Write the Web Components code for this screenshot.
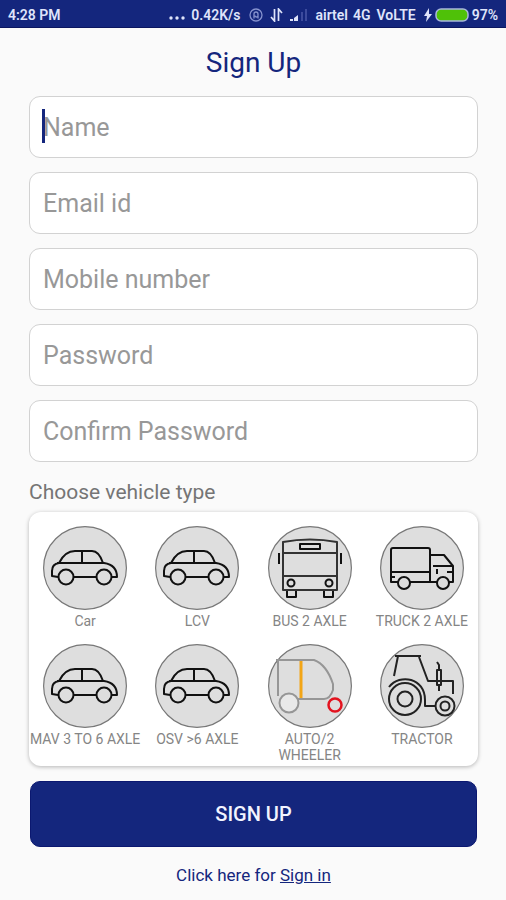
<!DOCTYPE html>
<html lang="en">
<head>
<meta charset="utf-8">
<meta name="viewport" content="width=device-width, initial-scale=1">
<title>Sign Up</title>
<style>
html { background: #fafafa; }
body { margin: 0; font-family: Roboto, "Liberation Sans", sans-serif; color: #757575; --navy: #14267d; }
</style>
</head>
<body>
<signup-screen></signup-screen>
<script>
const define = (name, html, setup) => customElements.define(name, class extends HTMLElement {
  constructor() {
    super();
    const t = document.createElement('template');
    t.innerHTML = html;
    this.attachShadow({ mode: 'open' }).append(t.content.cloneNode(true));
  }
  connectedCallback() { if (setup) setup(this, this.shadowRoot); }
});

define('status-bar', `
<style>
:host { display: flex; justify-content: space-between; align-items: center; height: 28px; padding: 2px 8px 0; box-sizing: border-box;
  background: var(--navy); color: #dfe4fa; font-size: 14px; font-weight: 600; line-height: 16px; white-space: nowrap; border-bottom: 1px solid #0b1660; }
.right { display: flex; align-items: center; }
svg { display: block; fill: none; }
.dots { margin-right: 6px; } .ring { margin: 0 7px 0 8px; } .arrows { margin-right: 7px; } .signal { margin-right: 8px; }
.net { margin: 0 6px 0 5px; } .bolt { margin: 0 2px 0 7px; } .battery { margin-right: 3px; }
</style>
<span>4:28 PM</span>
<span class="right">
<svg class="dots" width="16" height="16"><g fill="#dfe4fa"><circle cx="2" cy="11" r="1.7"/><circle cx="8" cy="11" r="1.7"/><circle cx="14" cy="11" r="1.7"/></g></svg>
<span>0.42K/s</span>
<svg class="ring" width="14" height="14" stroke="#8793cf" stroke-width="1.3"><circle cx="7" cy="7" r="6"/><path d="M5 10.500V6a2 2 0 0 1 4 0v1.500a1.500 1.500 0 0 1-3 0M9 8v2.500"/></svg>
<svg class="arrows" width="13" height="14" stroke="#dfe4fa" stroke-width="1.7"><path d="M4.500 1v12L1 9M8.500 13V1L12 5"/></svg>
<svg class="signal" width="18" height="14"><path fill="#dfe4fa" d="M0 13v-2h3v2zM4 13v-3l4-3v6z"/><path fill="#3c4b9d" d="M11 13V4h2v9zM15 13V1h2v12z"/></svg>
<span>airtel</span><span class="net">4G</span><span>VoLTE</span>
<svg class="bolt" width="10" height="14"><path fill="#dfe4fa" d="M6 0 1 8h3L3 14l6-8H6z"/></svg>
<svg class="battery" width="34" height="14"><rect x="1" y="1" width="32" height="12" rx="5" fill="#4fc108" stroke="#a9b6dc" stroke-width="1.500"/></svg>
<span>97%</span>
</span>`);

define('text-field', `
<style>
:host { display: block; position: relative; }
input { display: block; width: 100%; height: 62px; box-sizing: border-box; margin: 0; padding: 0 13px; border: 1px solid #d2d2d2;
  border-radius: 11px; outline: none; background: #fff; color: #333; font: 25px/32px Roboto, "Liberation Sans", sans-serif; }
input::placeholder { color: #989898; opacity: 1; }
:host([active])::after { content: ""; position: absolute; left: 13px; top: 13px; width: 3px; height: 34px; background: var(--navy); }
</style>
<input>`, (host, root) => {
  const input = root.querySelector('input');
  input.type = host.getAttribute('type') || 'text';
  input.placeholder = host.getAttribute('label');
  input.setAttribute('aria-label', host.getAttribute('label'));
});

const icons = {
  car: '<path d="M16 37Q22 25 32 25H49Q56 25 60 37M39 25V37M14 37H61Q74 39 74 51H69M16 37Q9 38 9 45V50L15 51M31 51H53"/><circle cx="23" cy="51" r="7.500"/><circle cx="61" cy="51" r="7.500"/>',
  bus: '<path d="M15 16Q42 11 69 16V64H15zM15 27H69M15 50H69" stroke="#333"/><path d="M32 18H52V23H32zM11 27V38M73 27V38M19 65V71H28V65M56 65V71H65V65"/><circle cx="23" cy="57" r="3.500"/><circle cx="61" cy="57" r="3.500"/>',
  truck: '<path d="M18 56H11V24Q11 22 13 22H48Q50 22 50 24V56M30 56H57M69 56H73V40L64 29H50M11 46H50M53 40H73M57 43V48M67 46H73M11 51H15"/><circle cx="24" cy="57" r="6"/><circle cx="63" cy="57" r="6"/>',
  auto: '<g stroke="#969696"><path d="M8 16H46C57 20 62 31 65 40V46Q62 55 56 55H30M10 16V52"/><circle cx="21" cy="59" r="9.500" fill="#e9e9e9"/></g><path d="M33 17V54" stroke="#f2a516" stroke-width="3"/><circle cx="67" cy="61" r="6.500" stroke="#e3131f" stroke-width="2.500"/>',
  tractor: '<g stroke="#222"><path d="M15 12H41M18 12 14 32M39 13 48 37H73V50M9 43C20 29 45 34 45 56V62H56M57 26H61V41H57zM59 41V47M59 26V21L57 18"/><circle cx="25" cy="55" r="16"/><circle cx="25" cy="55" r="7.500"/><circle cx="65" cy="62" r="9.500"/><circle cx="65" cy="62" r="4.500"/></g>'
};

define('vehicle-icon', `
<style>
:host { display: block; width: 84px; height: 84px; }
svg { display: block; width: 100%; height: 100%; fill: none; stroke: #111; stroke-width: 2; stroke-linejoin: round; }
</style>
<svg viewBox="0 0 84 84" aria-hidden="true"></svg>`, (host, root) => {
  root.querySelector('svg').innerHTML = '<circle cx="42" cy="42" r="41.400" fill="#dedede" stroke="#777" stroke-width="1.200"/>' + icons[host.getAttribute('name')];
});

const vehicles = [['car', 'Car'], ['car', 'LCV'], ['bus', 'BUS 2 AXLE'], ['truck', 'TRUCK 2 AXLE'],
  ['car', 'MAV 3 TO 6 AXLE'], ['car', 'OSV &gt;6 AXLE'], ['auto', 'AUTO/2 WHEELER'], ['tractor', 'TRACTOR']];

define('vehicle-picker', `
<style>
:host { display: block; background: #fff; border-radius: 12px; padding: 14px 0 3px; box-shadow: 0 1px 4px rgba(0,0,0,.28); }
.grid { display: grid; grid-template-columns: repeat(4, 1fr); row-gap: 15px; }
label { display: flex; flex-direction: column; align-items: center; gap: 3px; text-align: center; font-size: 14px; line-height: 16px; color: #858585; cursor: pointer; }
label span { max-width: 112px; }
input { appearance: none; position: absolute; margin: 0; width: 1px; height: 1px; opacity: 0; }
input:focus-visible + vehicle-icon { outline: 2px solid var(--navy); border-radius: 50%; }
</style>
<div class="grid" role="radiogroup" aria-label="Choose vehicle type">${vehicles.map(([icon, text], i) =>
  `<label><input type="radio" name="vehicle" value="${i}"><vehicle-icon name="${icon}"></vehicle-icon><span>${text}</span></label>`).join('')}</div>`);

define('primary-button', `
<style>
:host { display: block; padding: 0 1px; }
button { display: block; width: 100%; height: 66px; border: 1px solid #0b1870; border-radius: 10px; background: var(--navy); color: #f2f4ff; font: 500 20px/24px Roboto, "Liberation Sans", sans-serif; }
</style>
<button type="button"><slot></slot></button>`);

define('signup-screen', `
<style>
:host { display: block; }
main { display: flex; flex-direction: column; padding: 18px 28px 12px 29px; }
h1 { margin: 0 0 16px; text-align: center; font-size: 28px; line-height: 34px; font-weight: 400; color: var(--navy); }
.fields { display: flex; flex-direction: column; gap: 14px; }
h2 { margin: 18px 0 8px; font-size: 21px; line-height: 24px; font-weight: 400; }
primary-button { margin-top: 15px; }
p { margin: 18px 0 0; text-align: center; font-size: 17px; line-height: 20px; color: var(--navy); }
a { color: inherit; }
</style>
<status-bar></status-bar>
<main>
<h1>Sign Up</h1>
<div class="fields">
<text-field label="Name" active></text-field>
<text-field label="Email id" type="email"></text-field>
<text-field label="Mobile number" type="tel"></text-field>
<text-field label="Password" type="password"></text-field>
<text-field label="Confirm Password" type="password"></text-field>
</div>
<h2>Choose vehicle type</h2>
<vehicle-picker></vehicle-picker>
<primary-button>SIGN UP</primary-button>
<p>Click here for <a href="#signin">Sign in</a></p>
</main>`);
</script>
</body>
</html>
